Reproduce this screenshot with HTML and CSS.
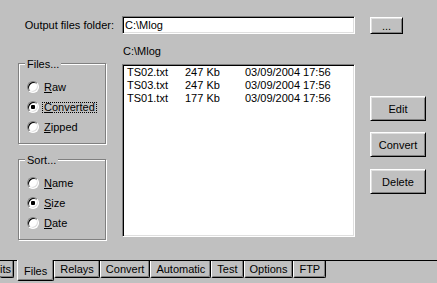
FILE: index.html
```html
<!DOCTYPE html>
<html lang="en">
<head>
    <meta charset="UTF-8">
    <meta name="viewport" content="width=device-width, initial-scale=1.0">
    <title>Files</title>
    <link rel="stylesheet" href="styles.css">
</head>
<body>
    <div class="panel">
        <div class="form">
            <label class="folder-label" for="folder">Output files folder:</label>
            <input class="folder-input" id="folder" type="text" value="C:\Mlog">
            <div class="browse-cell"><button class="btn btn-browse">...</button></div>

            <div class="options">
                <div class="group">
                    <span class="legend">Files...</span>
                    <div class="radio"><span class="radio-mark"></span><span class="radio-text"><u>R</u>aw</span></div>
                    <div class="radio checked focused"><span class="radio-mark"></span><span class="radio-text"><u>C</u>onverted</span></div>
                    <div class="radio"><span class="radio-mark"></span><span class="radio-text"><u>Z</u>ipped</span></div>
                </div>
                <div class="group">
                    <span class="legend">Sort...</span>
                    <div class="radio"><span class="radio-mark"></span><span class="radio-text"><u>N</u>ame</span></div>
                    <div class="radio checked"><span class="radio-mark"></span><span class="radio-text"><u>S</u>ize</span></div>
                    <div class="radio"><span class="radio-mark"></span><span class="radio-text"><u>D</u>ate</span></div>
                </div>
            </div>

            <div class="files">
                <div class="path">C:\Mlog</div>
                <div class="listbox">
                    <div class="row"><span>TS02.txt</span><span>247 Kb</span><span>03/09/2004 17:56</span></div>
                    <div class="row"><span>TS03.txt</span><span>247 Kb</span><span>03/09/2004 17:56</span></div>
                    <div class="row"><span>TS01.txt</span><span>177 Kb</span><span>03/09/2004 17:56</span></div>
                </div>
            </div>

            <div class="actions">
                <button class="btn btn-action">Edit</button>
                <button class="btn btn-action">Convert</button>
                <button class="btn btn-action btn-delete">Delete</button>
            </div>
        </div>
    </div>
    <div class="tabs">
        <div class="tab tab-cut">its</div>
        <div class="tab active">Files</div>
        <div class="tab">Relays</div>
        <div class="tab">Convert</div>
        <div class="tab">Automatic</div>
        <div class="tab">Test</div>
        <div class="tab">Options</div>
        <div class="tab">FTP</div>
    </div>
</body>
</html>
```

FILE: styles.css
```css
* { box-sizing: border-box; }
html, body { margin: 0; padding: 0; }
body {
    width: 437px; height: 283px; overflow: hidden; background: #c0c0c0; color: #000;
    font-family: "Liberation Sans", Arial, sans-serif; font-size: 11px;
}

/* sunken / raised 3d edges */
.folder-input, .listbox {
    border: 1px solid; border-color: #808080 #fff #fff #808080;
    box-shadow: inset 1px 1px 0 #000, inset -1px -1px 0 #dfdfdf; background: #fff;
}
.btn {
    background: #c0c0c0; color: #000; font: inherit; padding: 0; cursor: pointer;
    border: 1px solid; border-color: #fff #000 #000 #fff;
    box-shadow: inset 1px 1px 0 #dfdfdf, inset -1px -1px 0 #808080;
}

.panel { height: 261px; border-bottom: 1px solid #000; padding-top: 16px; }
.form { display: grid; grid-template-columns: 122px 233px 82px; grid-template-rows: 18px auto; }

.folder-label { align-self: center; text-align: right; padding-right: 8px; }
.folder-input { width: 233px; height: 18px; padding: 0 0 0 2px; font: inherit; color: #000; outline: none; }
.btn-browse { display: block; width: 33px; height: 17px; margin: 1px 0 0 15px; }

.options { padding: 29px 0 0 18px; }
.group {
    position: relative; width: 88px; padding: 13px 0 6px 8px;
    border: 1px solid #808080; box-shadow: inset 1px 1px 0 #fff, 1px 1px 0 #fff;
}
.group + .group { margin-top: 15px; }
.legend { position: absolute; left: 6px; top: -6px; padding: 0 2px; background: #c0c0c0; line-height: 13px; }

.radio { display: flex; align-items: center; height: 20px; }
.radio-mark {
    position: relative; width: 12px; height: 12px; margin-right: 3px; border-radius: 50%; background: #fff;
    border: 1px solid; border-color: #808080 #fff #fff #808080;
    box-shadow: inset 1px 1px 0 #000, inset -1px -1px 0 #dfdfdf;
}
.radio.checked .radio-mark::after {
    content: ""; position: absolute; left: 3px; top: 3px; width: 4px; height: 4px; background: #000; border-radius: 1px;
}
.radio-text { display: inline-block; line-height: 9px; padding: 0 1px; border: 1px dotted transparent; }
.radio.focused .radio-text { border-color: #000; }

.path { margin-top: 11px; line-height: 13px; padding-left: 1px; }
.listbox { height: 173px; margin-top: 6px; padding: 1px 0 0 4px; }
.row { display: grid; grid-template-columns: 58px 60px auto; line-height: 13px; white-space: nowrap; }

.actions { display: flex; flex-direction: column; align-items: flex-start; gap: 11px; padding: 62px 0 0 15px; }
.btn-action { width: 56px; height: 25px; }
.btn-delete { margin-top: 1px; }

.tabs { display: flex; align-items: flex-start; }
.tab {
    height: 17px; padding: 1px 5px 0; line-height: 14px; white-space: nowrap;
    border-left: 1px solid #fff; border-right: 1px solid #000; border-bottom: 1px solid #000;
    border-radius: 0 0 2px 2px; box-shadow: inset -1px -1px 0 #808080;
}
.tab-cut { border-left: none; padding-left: 0; padding-right: 2px; }
.tab.active { height: 21px; margin: -1px 0 0 3px; padding: 4px 6px 0; background: #c0c0c0; }
```
